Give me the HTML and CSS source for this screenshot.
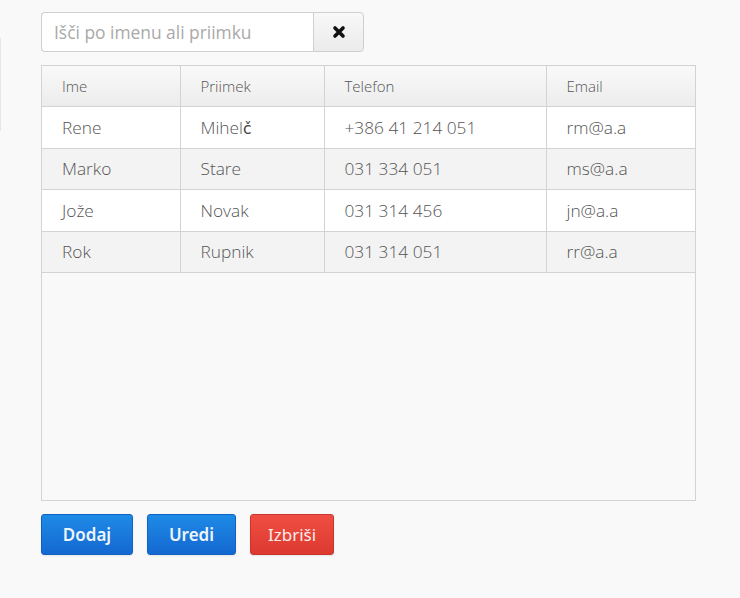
FILE: index.html
```html
<!DOCTYPE html>
<html>
<head>
<meta charset="utf-8">
<link rel="stylesheet" href="styles.css">
</head>
<body>
<div class="edge"></div>
<div class="page">
  <div class="search">
    <input class="search-input" type="text" placeholder="Išči po imenu ali priimku">
    <button class="clear-btn" type="button">
      <svg width="14" height="14" viewBox="0 0 14 14"><path d="M3 3 L11 11 M11 3 L3 11" stroke="#111" stroke-width="3.6" stroke-linecap="round"/></svg>
    </button>
  </div>
  <div class="table-box">
    <table class="grid">
      <colgroup><col class="c1"><col class="c2"><col class="c3"><col class="c4"></colgroup>
      <thead>
        <tr><th>Ime</th><th>Priimek</th><th>Telefon</th><th>Email</th></tr>
      </thead>
      <tbody>
        <tr><td>Rene</td><td>Mihel<span class="fb">č</span></td><td>+386 41 214 051</td><td>rm@a.a</td></tr>
        <tr><td>Marko</td><td>Stare</td><td>031 334 051</td><td>ms@a.a</td></tr>
        <tr><td>Jože</td><td>Novak</td><td>031 314 456</td><td>jn@a.a</td></tr>
        <tr><td>Rok</td><td>Rupnik</td><td>031 314 051</td><td>rr@a.a</td></tr>
      </tbody>
    </table>
  </div>
  <div class="actions">
    <button class="btn btn-blue btn-add" type="button">Dodaj</button>
    <button class="btn btn-blue btn-edit" type="button">Uredi</button>
    <button class="btn btn-red" type="button">Izbriši</button>
  </div>
</div>
</body>
</html>
```
FILE: styles.css
```css
html, body {
  margin: 0;
  padding: 0;
  background: #f9f9f9;
}
body {
  font-family: "Open Sans", "DejaVu Sans", sans-serif;
  color: #555;
  position: relative;
  width: 740px;
  height: 598px;
  overflow: hidden;
}
.edge {
  position: absolute;
  left: 0;
  top: 38px;
  width: 1px;
  height: 93px;
  background: #e6e6e6;
}
.page {
  padding: 12px 0 0 41px;
  width: 655px;
}
.search {
  display: flex;
  width: 323px;
  height: 40px;
}
.search-input {
  box-sizing: border-box;
  width: 272px;
  height: 40px;
  margin: 0;
  border: 1px solid #cfcfcf;
  border-right: none;
  border-radius: 4px 0 0 4px;
  padding: 0 0 0 12px;
  font-family: "Open Sans", sans-serif;
  font-size: 17.4px;
  color: #555;
  background: #fff;
  outline: none;
}
.search-input::placeholder {
  color: #a9a9a9;
}
.clear-btn {
  box-sizing: border-box;
  width: 51px;
  height: 40px;
  margin: 0;
  border: 1px solid #cfcfcf;
  border-radius: 0 4px 4px 0;
  background: linear-gradient(#f8f8f8, #ebebeb);
  display: flex;
  align-items: center;
  justify-content: center;
  padding: 0;
}
.table-box {
  box-sizing: border-box;
  margin-top: 13px;
  width: 655px;
  height: 436px;
  border: 1px solid #d3d3d3;
  background: #f9f9f9;
}
.grid {
  width: 653px;
  border-collapse: collapse;
  table-layout: fixed;
}
.c1 { width: 138px; }
.c2 { width: 144px; }
.c3 { width: 222px; }
.c4 { width: 149px; }
.grid th, .grid td {
  text-align: left;
  padding: 0 0 0 20px;
  border-left: 1px solid #d3d3d3;
  border-bottom: 1px solid #d3d3d3;
  font-weight: 300;
  white-space: nowrap;
}
.grid th:first-child, .grid td:first-child {
  border-left: none;
}
.grid th {
  height: 40px;
  font-size: 15px;
  background: linear-gradient(#f9f9f9, #ececec);
  color: #555;
}
.grid td {
  height: 40.5px;
  font-size: 17.3px;
}
.fb {
  font-family: "DejaVu Sans", sans-serif;
  font-weight: normal;
  font-size: 15.5px;
  color: #404040;
}
.grid tbody tr:nth-child(odd) td {
  background: #fff;
}
.grid tbody tr:nth-child(even) td {
  background: #f3f3f3;
}
.actions {
  display: flex;
  gap: 14px;
  margin-top: 13px;
}
.btn {
  box-sizing: border-box;
  height: 41px;
  border-radius: 3px;
  font-family: "Noto Sans", "DejaVu Sans", sans-serif;
  font-size: 17px;
  color: #eef4fb;
  padding: 0;
  box-shadow: 0 1px 2px rgba(0,0,0,0.08);
}
.btn-blue {
  background: linear-gradient(#1e8ae6, #1468d0);
  border: 1px solid #1260c0;
  font-weight: 600;
}
.btn-add { width: 92px; }
.btn-edit { width: 89px; }
.btn-red {
  width: 84px;
  background: linear-gradient(#f04e42, #dc3a30);
  border: 1px solid #c8352c;
  font-weight: normal;
  color: #fbecea;
}
```
